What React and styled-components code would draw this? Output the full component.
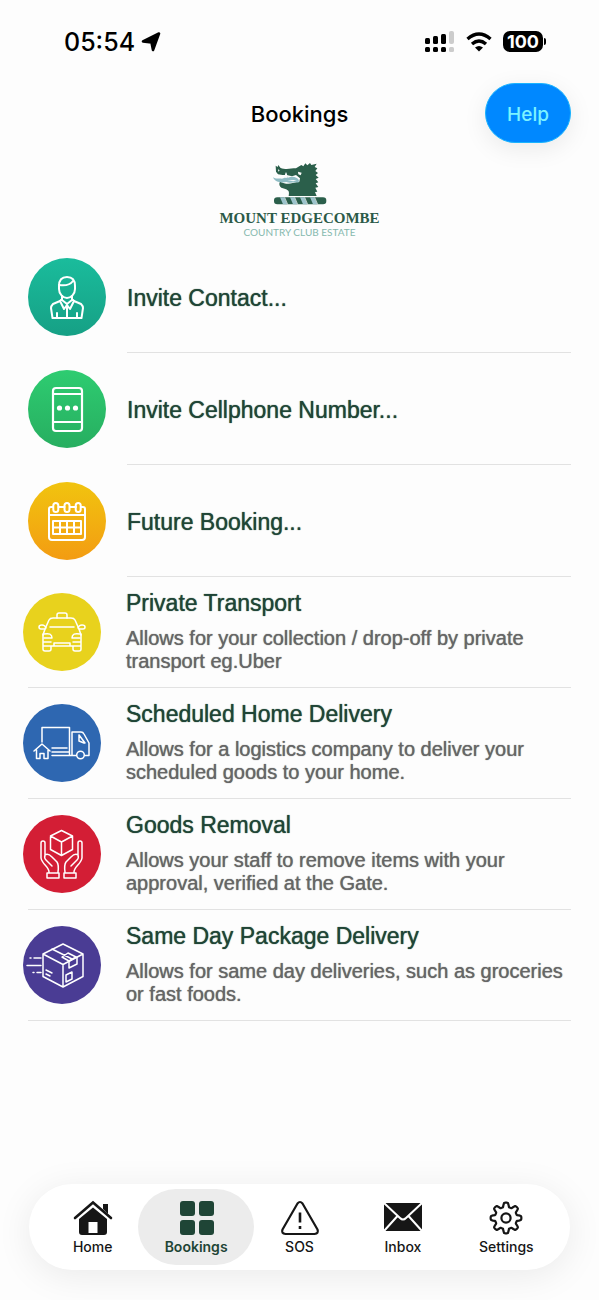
import React from "react";
import styled, { createGlobalStyle } from "styled-components";

const GlobalStyle = createGlobalStyle`
  * {
    box-sizing: border-box;
  }
  body {
    margin: 0;
    background: #fdfdfd;
    font-family: "Inter", "Liberation Sans", sans-serif;
  }
  button {
    font-family: inherit;
    cursor: pointer;
  }
`;

const Screen = styled.div`
  min-height: 100vh;
  display: flex;
  flex-direction: column;
`;

// top of the phone
const StatusBar = styled.div`
  height: 83px;
  padding: 0 53px 0 64px;
  display: flex;
  align-items: center;
  justify-content: space-between;
`;

const StatusGroup = styled.div`
  display: flex;
  align-items: center;
  gap: ${(props) => props.$gap}px;
`;

const Clock = styled.span`
  font-size: 25px;
  font-weight: 500;
  line-height: 32px;
`;

const Battery = styled.span`
  width: 40px;
  height: 21px;
  border-radius: 7px;
  background: #000;
  color: #fff;
  font-size: 18px;
  font-weight: 700;
  line-height: 21px;
  text-align: center;
`;

const BatteryTip = styled.span`
  width: 2px;
  height: 7px;
  border-radius: 0 2px 2px 0;
  background: #000;
`;

const Header = styled.header`
  padding: 0 28px;
  display: grid;
  grid-template-columns: 1fr auto 1fr;
  align-items: center;
`;

const Title = styled.h1`
  grid-column: 2;
  margin: 0;
  padding-top: 2px;
  font-size: 22px;
  font-weight: 500;
  line-height: 28px;
`;

const HelpButton = styled.button`
  justify-self: end;
  width: 86px;
  height: 60px;
  padding: 2px 0 0;
  border: 1px solid #19b4ff;
  border-radius: 30px;
  background: #0088ff;
  color: #7df3ff;
  font-size: 19px;
  font-weight: 500;
  box-shadow: 0 6px 24px rgba(0, 0, 0, 0.08);
`;

const Brand = styled.div`
  height: 98px;
  padding-top: 20px;
  display: flex;
  flex-direction: column;
  align-items: center;
`;

const BrandName = styled.div`
  margin-top: 5px;
  color: #2b5a48;
  font-family: "Liberation Serif", serif;
  font-size: 15px;
  font-weight: 700;
  line-height: 16px;
`;

const BrandTag = styled.div`
  color: #86b9ae;
  font-family: "Lato", sans-serif;
  font-size: 10px;
  line-height: 12px;
`;

// list of booking types
const List = styled.ul`
  margin: 0;
  padding: 0 28px;
  list-style: none;
  font-family: "Liberation Sans", sans-serif;
  text-shadow: 0 0 1px currentColor;
`;

const SimpleRow = styled.button`
  width: 100%;
  height: 112px;
  padding: 0;
  border: 0;
  background: none;
  display: flex;
  align-items: stretch;
  gap: 21px;
  text-align: left;
  text-shadow: inherit;
`;

const DetailRow = styled(SimpleRow)`
  height: 111px;
  border-bottom: 1px solid #e2e2e2;
  gap: 25px;
`;

const Round = styled.span`
  flex: none;
  align-self: center;
  width: 78px;
  height: 78px;
  border-radius: 50%;
  background: ${(props) => props.$fill};
  margin-left: ${(props) => (props.$outdent ? "-5px" : "0")};

  svg {
    display: block;
    fill: none;
    stroke: #fff;
    stroke-linecap: round;
    stroke-linejoin: round;
  }
`;

const SimpleLabel = styled.span`
  flex: 1;
  padding-top: 3px;
  display: flex;
  align-items: center;
  border-bottom: 1px solid #e2e2e2;
  color: #1f4536;
  font-size: 23px;
`;

const DetailText = styled.span`
  flex: 1;
  min-width: 0;
  padding-top: 12px;
  display: flex;
  flex-direction: column;
  gap: 10px;
`;

const DetailTitle = styled.span`
  color: #1f4536;
  font-size: 23px;
  line-height: 28px;
`;

const DetailNote = styled.span`
  color: #666;
  font-size: 20px;
  line-height: 23px;
`;

// floating tab bar
const TabBar = styled.nav`
  margin: auto 29px 30px;
  height: 86px;
  padding: 5px 6px;
  border-radius: 43px;
  background: #fff;
  box-shadow: 0 6px 36px rgba(0, 0, 0, 0.08);
  display: flex;
`;

const Tab = styled.a`
  flex: 1 1 0;
  margin: 0 -6px;
  padding-top: 2px;
  border-radius: 38px;
  display: flex;
  flex-direction: column;
  align-items: center;
  justify-content: center;
  gap: 2px;
  background: ${(props) => (props.$active ? "#ececec" : "transparent")};
  color: ${(props) => (props.$active ? "#1f4536" : "#161616")};
  font-size: 14px;
  font-weight: ${(props) => (props.$active ? 600 : 500)};
  line-height: 18px;
  text-decoration: none;

  &:first-child {
    margin-left: 0;
  }
  &:last-child {
    margin-right: 0;
  }
`;

const ContactIcon = () => (
  <svg width="78" height="78" strokeWidth="2">
    <path d="M31 28c0-6 3-9 8-9s8 3 8 9v3c0 5-4 9-8 9s-8-4-8-9z" />
    <path d="M31 27c6 1 11 0 14-4M34 38v4l5 4 5-4v-4M34 41l-2 2 4 8 3-4 3 4 4-8-2-2M39 47v13" />
    <path d="M32 43l-7 3c-1 1-2 2-2 4l1.500 10h29L55 50c0-2-1-3-2-4l-7-3M29 55v5M49 55v5" />
  </svg>
);

const PhoneIcon = () => (
  <svg width="78" height="78" strokeWidth="2.200">
    <rect x="25" y="18" width="29" height="43" rx="3" />
    <path d="M25 24h29M25 52h29" />
    <g fill="#fff" stroke="none">
      <circle cx="31.500" cy="38" r="2.600" />
      <circle cx="39.500" cy="38" r="2.600" />
      <circle cx="47.500" cy="38" r="2.600" />
    </g>
  </svg>
);

const CalendarIcon = () => (
  <svg width="78" height="78" strokeWidth="2">
    <path d="M25 25h-2q-2 0-2 2v28q0 3 3 3h30q3 0 3-3V27q0-2-2-2h-2M30.500 25h6M42 25h6M21 33h36" />
    <rect x="25.300" y="21" width="5" height="9" rx="2.500" />
    <rect x="36.500" y="21" width="5" height="9" rx="2.500" />
    <rect x="47.700" y="21" width="5" height="9" rx="2.500" />
    <path d="M25 39h28v13H25zM25 45.500h28M32 39v13M39 39v13M46 39v13" />
  </svg>
);

const TaxiIcon = () => (
  <svg width="78" height="78" strokeWidth="1.500">
    <path d="M34 25v-3q0-2 2-2h6q2 0 2 2v3" />
    <path d="M20 42l2-6 4-9q1-2 4-2h18q3 0 4 2l4 9 2 6M27 34h24" />
    <path d="M22 36h-4q-2 0-2-2t3-2 4 3M56 36h4q2 0 2-2t-3-2-4 3" />
    <path d="M20 41v15q0 2 2 2h4q2 0 2-2v-3h22v3q0 2 2 2h4q2 0 2-2V41M20 49h8M50 49h8M20 53h8M50 53h8M31 53v-3h16v3" />
    <path d="M21 41c5-1 8 0 8 4h-8M57 41c-5-1-8 0-8 4h8" />
  </svg>
);

const TruckIcon = () => (
  <svg width="78" height="78" strokeWidth="1.500">
    <path d="M19 38V23.500h27.500V51M29 44h15M29 48h17M29 51.500h20M49 51.500V28h9q2 0 3 2l5 9v12.500h-4M49 51.500h4" />
    <path d="M56 31l6 8M56 31v6l5 2" />
    <circle cx="57.500" cy="51" r="3.800" />
    <path d="M11 47l8-7 8 7M13.500 46v8.500h3.500v-5h4v5h4V46" />
  </svg>
);

const HandsIcon = () => (
  <svg width="78" height="78" strokeWidth="1.500">
    <path d="M38.500 15.500l11 5.500v13.500l-11 6-11-6V21zM27.500 21l11 6 11-6M38.500 27v13.500" />
    <path d="M26 57c0-5-7-8-8-14V28q0-2 2-2t2 2v12c3-2 5 0 7 2l5 5q2 3 1 10M22 40q-1 3 1 5l6 6M24 58h12v5H24z" />
    <path d="M51 57c0-5 7-8 8-14V28q0-2-2-2t-2 2v12c-3-2-5 0-7 2l-5 5q-2 3-1 10M55 40q1 3-1 5l-6 6M41 58h12v5H41z" />
  </svg>
);

const ParcelIcon = () => (
  <svg width="78" height="78" strokeWidth="1.500">
    <path d="M40 18l20 10v22.500L40 61 20 50.500V28zM20 28l20 10.500L60 28M40 38.500V61" />
    <path d="M29 23l20 10M39 31l6-4 8 4-7 4zM46 35v7l8-4v-7M43 49l6-3v7l-6 3z" />
    <path d="M7 32h1M11 32h7M4 39.500h14M10 46.500h1M14 46.500h4M23 44l6 3M23 48l4 2" />
  </svg>
);

const BoarCrest = () => (
  <svg width="54" height="42" viewBox="20 14 160 126">
    <path
      fill="#2b5f4b"
      d="M27 22l6 4 2-6 6 8c17 8 31 2 47 2l16-10 6 4 6-9 6 6 8-7 4 6 16-4-6 10 8 4-6 8 8 6-7 6 9 8-9 4 8 10-8 3 8 11-9 2 6 12-7 1 5 12H66c2-11 2-17-10-21l-12-4c-6-4-8-12-4-18 12 6 26 8 38 4l20-4 2-10-12-10-12 4-16-4H48l-14-2-6-8z"
    />
    <path fill="#8fbcc4" d="M19 57c8 6 16 2 27 4l8-3 4-16 6 16c12-6 28-3 33 8l-2 7c-14-3-25 3-36-2-15 3-35 1-40-14z" />
    <path fill="#fdfdfd" d="M94 40l11 3-3 8-7-3zM52 57l6-16 6 16-6 2zM62 66l28-1-10 4zM34 33l5 3-4 4z" />
    <rect x="22" y="117" width="157" height="21" rx="10" fill="#2b5f4b" />
    <path fill="#9cc3cc" d="M40 117h13l9 21H49zM70 117h13l9 21H79zM100 117h13l9 21h-13zM130 117h13l9 21h-13z" />
    <path stroke="#fdfdfd" strokeWidth="2" d="M54 117l9 21M84 117l9 21M114 117l9 21M144 117l9 21" />
  </svg>
);

const HomeIcon = () => (
  <svg width="40" height="36" viewBox="0 0 40 36" fill="currentColor">
    <path d="M30 4h5v10l-5-5z" />
    <path d="M2 18L20 2.500 38 18" fill="none" stroke="currentColor" strokeWidth="2.600" strokeLinecap="round" />
    <path d="M20 7.500L34 19v13q0 3-3 3H9q-3 0-3-3V19zM15.500 22v11h9V22z" fillRule="evenodd" />
  </svg>
);

const GridIcon = () => (
  <svg width="40" height="36" viewBox="0 0 40 36" fill="currentColor">
    <rect x="4" y="1" width="15" height="15" rx="3" />
    <rect x="23" y="1" width="15" height="15" rx="3" />
    <rect x="4" y="20" width="15" height="15" rx="3" />
    <rect x="23" y="20" width="15" height="15" rx="3" />
  </svg>
);

const SosIcon = () => (
  <svg width="40" height="36" viewBox="0 0 40 36" fill="none" stroke="currentColor" strokeWidth="2.200">
    <path d="M17.500 3.500q2.500-3 5 0L37.500 29.500q1.500 4-3 4.500h-29q-4.500-.5-3-4.500z" strokeLinejoin="round" />
    <path d="M20 12.500v10M20 26v3" strokeWidth="2.600" />
  </svg>
);

const InboxIcon = () => (
  <svg width="40" height="36" viewBox="0 0 40 36">
    <rect x="1" y="3" width="38" height="28" rx="2" fill="currentColor" />
    <path d="M1 3l16 15q3 3 6 0L39 3M1 31l13.500-15M39 31L25.500 16" fill="none" stroke="#fff" strokeWidth="2" />
  </svg>
);

// gear outline, eight teeth around the centre
const gearPoints = Array.from({ length: 96 }, (_, i) => {
  const angle = (i / 96) * Math.PI * 2;
  const wave = Math.cos(angle * 8);
  const radius = 13.2 + 2.2 * Math.tanh(wave * 2.4);
  return `${(20 + radius * Math.cos(angle)).toFixed(2)},${(18 + radius * Math.sin(angle)).toFixed(2)}`;
}).join(" ");

const GearIcon = () => (
  <svg width="40" height="36" viewBox="0 0 40 36" fill="none" stroke="currentColor" strokeWidth="2.200">
    <polygon points={gearPoints} strokeLinejoin="round" />
    <circle cx="20" cy="18" r="4.600" />
  </svg>
);

const simpleItems = [
  { label: "Invite Contact...", fill: "linear-gradient(#1abc9c, #16a085)", Icon: ContactIcon },
  { label: "Invite Cellphone Number...", fill: "linear-gradient(#2ecc71, #27ae60)", Icon: PhoneIcon },
  { label: "Future Booking...", fill: "linear-gradient(#f1c40f, #f39c12)", Icon: CalendarIcon },
];

const detailItems = [
  {
    title: "Private Transport",
    note: "Allows for your collection / drop-off by private transport eg.Uber",
    fill: "#e8d21d",
    Icon: TaxiIcon,
  },
  {
    title: "Scheduled Home Delivery",
    note: "Allows for a logistics company to deliver your scheduled goods to your home.",
    fill: "#2e67b1",
    Icon: TruckIcon,
  },
  {
    title: "Goods Removal",
    note: "Allows your staff to remove items with your approval, verified at the Gate.",
    fill: "#d31e35",
    Icon: HandsIcon,
  },
  {
    title: "Same Day Package Delivery",
    note: "Allows for same day deliveries, such as groceries or fast foods.",
    fill: "#4a3c94",
    Icon: ParcelIcon,
  },
];

const tabs = [
  { name: "Home", Icon: HomeIcon },
  { name: "Bookings", Icon: GridIcon },
  { name: "SOS", Icon: SosIcon },
  { name: "Inbox", Icon: InboxIcon },
  { name: "Settings", Icon: GearIcon },
];

const App = () => {
  return (
    <Screen>
      <GlobalStyle />
      <StatusBar>
        <StatusGroup $gap={6}>
          <Clock>05:54</Clock>
          <svg width="20" height="20" viewBox="0 0 20 20">
            <path
              d="M18 1.500L12 18 10.500 10.500 2 9.500z"
              stroke="#000"
              strokeWidth="2.600"
              strokeLinejoin="round"
            />
          </svg>
        </StatusGroup>
        <StatusGroup $gap={11}>
          <svg width="30" height="22" viewBox="0 0 30 22">
            <rect x="0" y="7" width="5" height="6" rx="1.500" />
            <rect x="8" y="5" width="5" height="8" rx="1.500" />
            <rect x="16" y="3" width="5" height="10" rx="1.500" />
            <rect x="24" y="0" width="5" height="13" rx="2" fill="#ccc" />
            <rect x="0" y="16" width="5" height="5" rx="1.500" />
            <rect x="8" y="16" width="5" height="5" rx="1.500" />
            <rect x="16" y="16" width="5" height="5" rx="1.500" />
            <rect x="24" y="16" width="5" height="5" rx="1.500" fill="#ccc" />
          </svg>
          <svg width="26" height="20" viewBox="0 0 26 20" fill="none" stroke="#000" strokeWidth="3.400">
            <path d="M1.500 7q11.500-10 23 0M6 12q7-6 14 0" />
            <path d="M13 19.500l-4-4q4-3 8 0z" fill="#000" stroke="none" />
          </svg>
          <StatusGroup $gap={1}>
            <Battery>100</Battery>
            <BatteryTip />
          </StatusGroup>
        </StatusGroup>
      </StatusBar>

      <Header>
        <Title>Bookings</Title>
        <HelpButton>Help</HelpButton>
      </Header>

      <Brand>
        <BoarCrest />
        <BrandName>MOUNT EDGECOMBE</BrandName>
        <BrandTag>COUNTRY CLUB ESTATE</BrandTag>
      </Brand>

      <List>
        {simpleItems.map(({ label, fill, Icon }) => (
          <li key={label}>
            <SimpleRow>
              <Round $fill={fill}>
                <Icon />
              </Round>
              <SimpleLabel>{label}</SimpleLabel>
            </SimpleRow>
          </li>
        ))}
        {detailItems.map(({ title, note, fill, Icon }) => (
          <li key={title}>
            <DetailRow>
              <Round $fill={fill} $outdent>
                <Icon />
              </Round>
              <DetailText>
                <DetailTitle>{title}</DetailTitle>
                <DetailNote>{note}</DetailNote>
              </DetailText>
            </DetailRow>
          </li>
        ))}
      </List>

      <TabBar>
        {tabs.map(({ name, Icon }) => (
          <Tab key={name} href="#" $active={name === "Bookings"}>
            <Icon />
            {name}
          </Tab>
        ))}
      </TabBar>
    </Screen>
  );
};

export default App;
